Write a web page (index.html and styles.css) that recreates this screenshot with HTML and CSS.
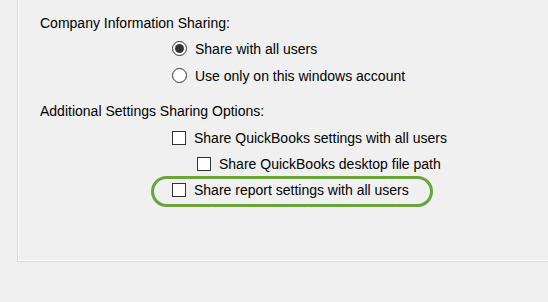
FILE: index.html
```html
<!DOCTYPE html>
<html lang="en">
<head>
    <meta charset="UTF-8">
    <title>Preferences</title>
    <link rel="stylesheet" href="styles.css">
</head>
<body>
    <div class="panel">
        <div class="panel-inner">
            <div class="group-title">Company Information Sharing:</div>
            <div class="options">
                <div class="row">
                    <span class="radio checked"></span>
                    <span class="label">Share with all users</span>
                </div>
                <div class="row">
                    <span class="radio"></span>
                    <span class="label">Use only on this windows account</span>
                </div>
            </div>

            <div class="group-title second">Additional Settings Sharing Options:</div>
            <div class="options">
                <div class="row check-row">
                    <span class="checkbox"></span>
                    <span class="label">Share QuickBooks settings with all users</span>
                </div>
                <div class="row check-row nested">
                    <span class="checkbox"></span>
                    <span class="label">Share QuickBooks desktop file path</span>
                </div>
                <div class="row check-row highlighted">
                    <span class="checkbox"></span>
                    <span class="label">Share report settings with all users</span>
                </div>
            </div>
        </div>
    </div>
</body>
</html>
```

FILE: styles.css
```css
body {
    margin: 0;
    background-color: #f0f0f0;
    font-family: "Liberation Sans", Arial, sans-serif;
    font-size: 14px;
    color: #000;
}

.panel {
    margin-left: 17px;
    height: 262px;
    border-left: 1px solid #d9d9d9;
    border-bottom: 1px solid #d9d9d9;
    box-sizing: border-box;
}

.panel-inner {
    height: 100%;
    border-left: 1px solid #fff;
    border-bottom: 1px solid #fff;
    box-sizing: border-box;
    padding: 13px 0 0 21px;
}

.group-title {
    line-height: 20px;
}

.group-title.second {
    margin-top: 12px;
}

.options {
    margin-left: 132px;
    margin-top: 2px;
}

.row {
    display: flex;
    align-items: center;
    height: 27px;
}

.check-row {
    height: 26px;
}

.check-row:first-child {
    margin-top: 4px;
}

.nested {
    padding-left: 25px;
}

.label {
    margin-left: 8px;
}

.radio {
    width: 15px;
    height: 15px;
    border: 1px solid #333;
    border-radius: 50%;
    background-color: #fff;
    box-sizing: border-box;
    display: flex;
    align-items: center;
    justify-content: center;
}

.radio.checked::after {
    content: "";
    width: 9px;
    height: 9px;
    border-radius: 50%;
    background-color: #333;
}

.checkbox {
    width: 14px;
    height: 14px;
    border: 1px solid #333;
    background-color: #fff;
    box-sizing: border-box;
}

.highlighted {
    position: relative;
}

/* green annotation ring */
.highlighted::before {
    content: "";
    position: absolute;
    left: -21px;
    top: -1px;
    width: 282px;
    height: 31px;
    border: 3px solid #6aa53a;
    border-radius: 16px;
    box-sizing: border-box;
}
```
